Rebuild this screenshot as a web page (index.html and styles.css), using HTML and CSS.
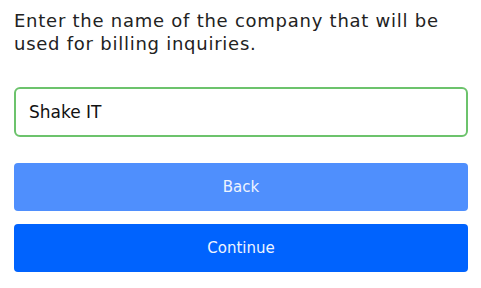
FILE: index.html
```html
<!DOCTYPE html>
<html>
<head>
<meta charset="utf-8">
<link rel="stylesheet" href="styles.css">
</head>
<body>
<div class="form">
  <p class="intro">Enter the name of the company that will be used for billing inquiries.</p>
  <input class="field" type="text" value="Shake IT">
  <div class="actions">
    <button class="btn btn-back">Back</button>
    <button class="btn btn-continue">Continue</button>
  </div>
</div>
</body>
</html>
```
FILE: styles.css
```css
html, body {
  margin: 0;
  padding: 0;
  background: #ffffff;
}
.form {
  padding: 9px 13px 0 14px;
  display: flex;
  flex-direction: column;
}
.intro {
  margin: 0;
  font-family: "DejaVu Sans", sans-serif;
  font-size: 18px;
  letter-spacing: 0.75px;
  line-height: 23px;
  color: #222222;
  width: 450px;
}
.field {
  box-sizing: border-box;
  margin-top: 32px;
  width: 454px;
  height: 50px;
  border: 2px solid #6cc36c;
  border-radius: 6px;
  padding: 0 13px;
  font-family: "DejaVu Sans", sans-serif;
  font-size: 17px;
  color: #111111;
  outline: none;
}
.actions {
  margin-top: 26px;
  display: flex;
  flex-direction: column;
  gap: 13px;
}
.btn {
  box-sizing: border-box;
  width: 454px;
  height: 48px;
  border: none;
  border-radius: 4px;
  font-family: "DejaVu Sans", sans-serif;
  font-size: 15px;
  color: #eef4ff;
}
.btn-back {
  background: #4f8ffd;
}
.btn-continue {
  background: #0063fe;
}
```
